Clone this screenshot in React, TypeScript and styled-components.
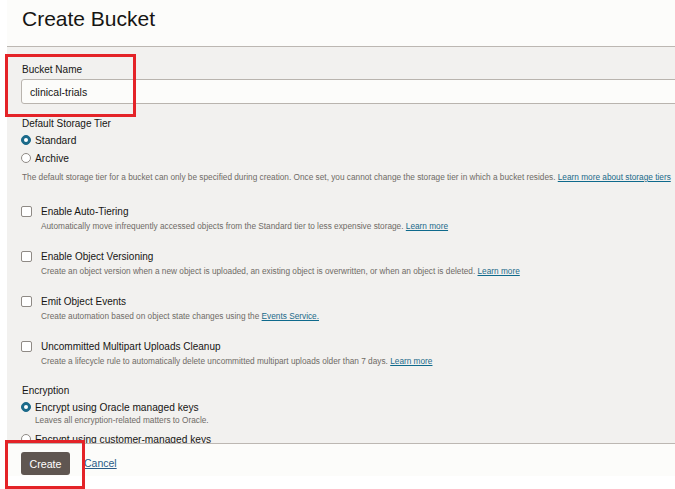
import React from 'react';
import styled, { createGlobalStyle } from 'styled-components';

const GlobalStyle = createGlobalStyle`
  html, body {
    margin: 0;
    padding: 0;
    background: #ffffff;
    overflow: hidden;
  }
  body {
    font-family: "Liberation Sans", Arial, sans-serif;
    color: #161513;
  }
`;

const Page = styled.div`
  position: relative;
  width: 675px;
  height: 489px;
  overflow: hidden;
  padding-left: 7px;
  box-sizing: border-box;
`;

const Panel = styled.div`
  width: 740px;
  display: flex;
  flex-direction: column;
`;

const Header = styled.div`
  height: 46px;
  background: #fcfcfa;
  border-bottom: 1px solid #bcb7b2;
  padding-left: 15px;
  display: flex;
  align-items: center;
`;

const Title = styled.h1`
  margin: 0;
  font-size: 21px;
  font-weight: 400;
  color: #161513;
  letter-spacing: 0;
  padding-bottom: 8px;
`;

const Body = styled.div`
  height: 396px;
  overflow: hidden;
  background: #f2f1ef;
  padding: 17px 0 0 15px;
  box-sizing: border-box;
`;

const FieldLabel = styled.div<{ $gap?: number }>`
  font-size: 10px;
  line-height: 12px;
  color: #161513;
  margin-top: ${({ $gap }) => $gap ?? 0}px;
`;

const TextInput = styled.div`
  margin-top: 3px;
  margin-left: -1px;
  height: 25px;
  box-sizing: border-box;
  border: 1px solid #b9b4ae;
  border-radius: 3px;
  background: #fcfcfa;
  padding-left: 8px;
  display: flex;
  align-items: center;
  font-size: 10.5px;
  color: #161513;
`;

const RadioRow = styled.label<{ $gap: number }>`
  display: flex;
  align-items: center;
  gap: 4px;
  height: 12px;
  margin-top: ${({ $gap }) => $gap}px;
  margin-left: -1px;
  font-size: 10.2px;
  color: #161513;
`;

const RadioDot = styled.span<{ $checked?: boolean }>`
  width: 10px;
  height: 10px;
  border-radius: 50%;
  box-sizing: border-box;
  flex-shrink: 0;
  position: relative;
  background: ${({ $checked }) => ($checked ? '#1b6a8a' : '#ffffff')};
  border: 1px solid ${({ $checked }) => ($checked ? '#1b6a8a' : '#8f8a85')};

  &::after {
    content: '';
    display: ${({ $checked }) => ($checked ? 'block' : 'none')};
    position: absolute;
    left: 50%;
    top: 50%;
    width: 4px;
    height: 4px;
    margin: -2px 0 0 -2px;
    border-radius: 50%;
    background: #ffffff;
  }
`;

const Help = styled.div<{ $gap: number; $indent?: number }>`
  font-size: 8.27px;
  line-height: 10px;
  color: #6f6b66;
  white-space: nowrap;
  margin-top: ${({ $gap }) => $gap}px;
  padding-left: ${({ $indent }) => $indent ?? 0}px;
`;

const Link = styled.a`
  color: #1b6a8a;
  text-decoration: underline;
  text-decoration-color: #0f6a8c;
  cursor: pointer;
`;

const OptionBlock = styled.div<{ $gap: number }>`
  margin-top: ${({ $gap }) => $gap}px;
`;

const CheckRow = styled.label`
  display: flex;
  align-items: center;
  gap: 9px;
  height: 12px;
  margin-left: -1px;
  font-size: 10px;
  color: #161513;
`;

const CheckBox = styled.span`
  width: 11px;
  height: 11px;
  box-sizing: border-box;
  border: 1px solid #8f8a85;
  border-radius: 2px;
  background: #ffffff;
  flex-shrink: 0;
`;

const Footer = styled.div`
  height: 33px;
  background: #fcfcfa;
  border-top: 1px solid #bcb7b2;
  padding: 8px 0 0 14px;
  box-sizing: border-box;
  display: flex;
  align-items: flex-start;
  gap: 14px;
`;

const PrimaryButton = styled.button`
  height: 23px;
  width: 49px;
  padding: 0;
  border: none;
  border-radius: 3px;
  background: #5f5651;
  color: #ffffff;
  font-family: "Liberation Sans", Arial, sans-serif;
  font-size: 10.7px;
  cursor: pointer;
`;

const TextLink = styled.a`
  font-size: 10.5px;
  line-height: 23px;
  color: #2a5a86;
  text-decoration: underline;
  cursor: pointer;
`;

const Highlight = styled.div<{ $x: number; $y: number; $w: number; $h: number }>`
  position: absolute;
  left: ${({ $x }) => $x}px;
  top: ${({ $y }) => $y}px;
  width: ${({ $w }) => $w}px;
  height: ${({ $h }) => $h}px;
  border: 3px solid #e42328;
  box-sizing: border-box;
  pointer-events: none;
`;

const options = [
  {
    title: 'Enable Auto-Tiering',
    text: 'Automatically move infrequently accessed objects from the Standard tier to less expensive storage. ',
    link: 'Learn more',
  },
  {
    title: 'Enable Object Versioning',
    text: 'Create an object version when a new object is uploaded, an existing object is overwritten, or when an object is deleted. ',
    link: 'Learn more',
  },
  {
    title: 'Emit Object Events',
    text: 'Create automation based on object state changes using the ',
    link: 'Events Service.',
  },
  {
    title: 'Uncommitted Multipart Uploads Cleanup',
    text: 'Create a lifecycle rule to automatically delete uncommitted multipart uploads older than 7 days. ',
    link: 'Learn more',
  },
];

export default function App() {
  return (
    <>
      <GlobalStyle />
      <Page>
        <Panel>
          <Header>
            <Title>Create Bucket</Title>
          </Header>
          <Body>
            <FieldLabel>Bucket Name</FieldLabel>
            <TextInput>clinical-trials</TextInput>

            <FieldLabel $gap={14}>Default Storage Tier</FieldLabel>
            <RadioRow $gap={4}>
              <RadioDot $checked />
              Standard
            </RadioRow>
            <RadioRow $gap={6}>
              <RadioDot />
              Archive
            </RadioRow>
            <Help $gap={9}>
              The default storage tier for a bucket can only be specified during creation. Once set, you cannot
              change the storage tier in which a bucket resides. <Link>Learn more about storage tiers</Link>
            </Help>

            {options.map((o, i) => (
              <OptionBlock key={o.title} $gap={i === 0 ? 22 : 18}>
                <CheckRow>
                  <CheckBox />
                  {o.title}
                </CheckRow>
                <Help $gap={5} $indent={19}>
                  {o.text}
                  <Link>{o.link}</Link>
                </Help>
              </OptionBlock>
            ))}

            <FieldLabel $gap={18}>Encryption</FieldLabel>
            <RadioRow $gap={4}>
              <RadioDot $checked />
              Encrypt using Oracle managed keys
            </RadioRow>
            <Help $gap={3} $indent={13}>
              Leaves all encryption-related matters to Oracle.
            </Help>
            <RadioRow $gap={7}>
              <RadioDot />
              Encrypt using customer-managed keys
            </RadioRow>
          </Body>
          <Footer>
            <PrimaryButton>Create</PrimaryButton>
            <TextLink>Cancel</TextLink>
          </Footer>
        </Panel>
        <Highlight $x={5} $y={54} $w={131} $h={63} />
        <Highlight $x={5} $y={440} $w={80} $h={49} />
      </Page>
    </>
  );
}
